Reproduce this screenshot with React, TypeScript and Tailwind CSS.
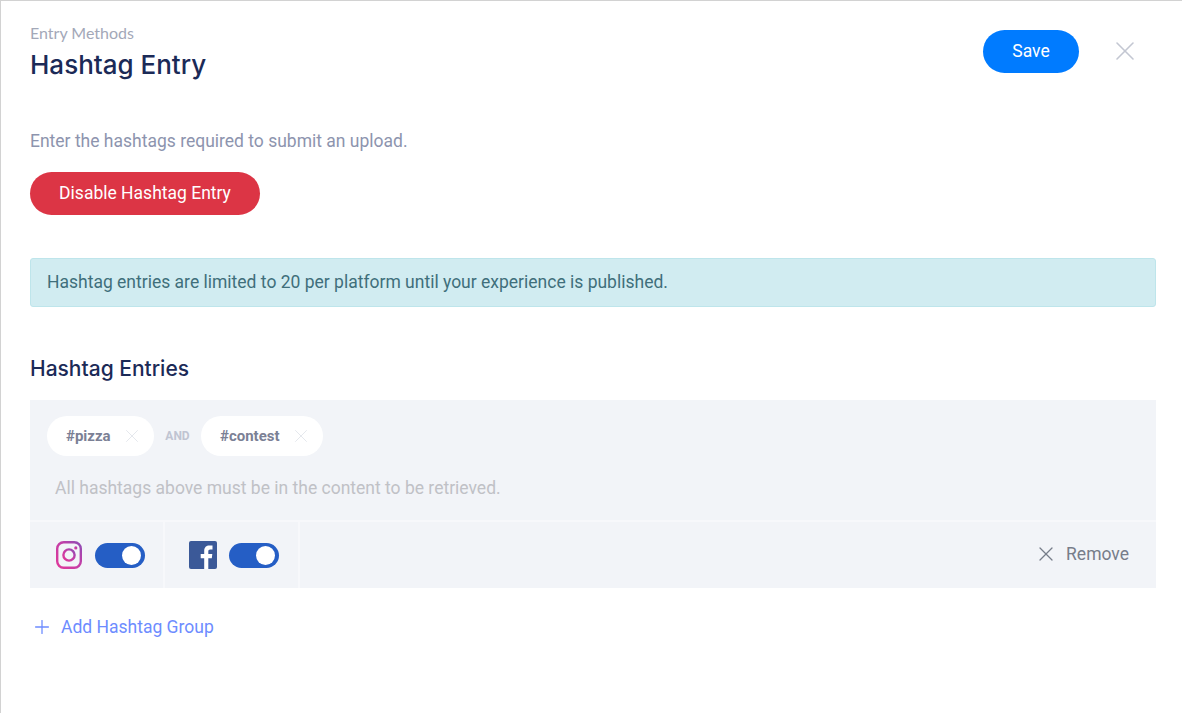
import { Plus, X } from 'lucide-react'

function Toggle() {
  return (
    <div className="flex h-[25px] w-[50px] items-center justify-end rounded-full bg-[#255ec5] pr-[4px]">
      <div className="h-[19px] w-[19px] rounded-full bg-white" />
    </div>
  )
}

function InstagramIcon() {
  return (
    <svg width="28" height="28" viewBox="0 0 28 28" fill="none">
      <defs>
        <linearGradient id="ig" x1="0" y1="1" x2="1" y2="0">
          <stop offset="0" stopColor="#e0389a" />
          <stop offset="0.6" stopColor="#c03fa8" />
          <stop offset="1" stopColor="#8d4cb5" />
        </linearGradient>
      </defs>
      <rect x="2.2" y="1.2" width="23.6" height="25.6" rx="6.5" stroke="url(#ig)" strokeWidth="2.4" />
      <circle cx="14" cy="14" r="5.6" stroke="url(#ig)" strokeWidth="2.4" />
      <circle cx="20.8" cy="6.9" r="1.6" fill="url(#ig)" />
    </svg>
  )
}

function FacebookIcon() {
  return (
    <svg width="28" height="28" viewBox="0 0 28 28">
      <rect width="28" height="28" rx="2" fill="#3b5998" />
      <path
        d="M19.3 28V17.2h3.5l.5-4.2h-4v-2.6c0-1.2.4-2 2.1-2h2.1V4.6c-.4 0-1.700-.2-3.100-.2-3.100 0-5.200 1.900-5.200 5.300V13h-3.500v4.200h3.500V28Z"
        fill="#fff"
      />
    </svg>
  )
}

function Tag({ label, width }: { label: string; width: string }) {
  return (
    <div className={`flex h-[40px] items-center justify-between rounded-full bg-white pl-[19px] pr-[15px] ${width}`}>
      <span className="text-[15px] font-bold text-[#7b8095]">{label}</span>
      <X size={22} strokeWidth={0.8} className="-mr-[4px] text-[#dcdfe6]" />
    </div>
  )
}

export default function App() {
  return (
    <div className="h-[713px] w-[1182px] overflow-hidden border-l border-t border-[#d2d2d2] bg-white pl-[29px] pr-[26px] font-['Roboto',sans-serif]">
      <div className="flex items-start justify-between pt-[22px]">
        <div>
          <p className="font-['Lato',sans-serif] text-[16px] leading-[20px] text-[#a3a8b8]">Entry Methods</p>
          <h1 className="mt-[6px] font-['Inter',sans-serif] text-[26px] font-medium leading-[32px] text-[#1b2a57]">
            Hashtag Entry
          </h1>
        </div>
        <div className="flex items-center pt-[7px]">
          <button className="h-[43px] w-[96px] rounded-full bg-[#007bff] text-[17.5px] font-normal text-white">
            Save
          </button>
          <X size={32} strokeWidth={1.2} className="-mt-[2px] ml-[30px] mr-[15px] text-[#c3c7d2]" />
        </div>
      </div>

      <p className="mt-[48px] text-[17.5px] leading-[24px] text-[#8d94ae]">Enter the hashtags required to submit an upload.</p>
      <button className="mt-[19px] block h-[43px] w-[230px] rounded-full bg-[#dc3545] text-[17.5px] font-normal text-white">
        Disable Hashtag Entry
      </button>

      <div className="mt-[43px] flex h-[49px] items-center rounded-[3px] border border-[#bee5eb] bg-[#d1ecf1] pl-[16px] text-[17.5px] text-[#3f6f7b]">
        Hashtag entries are limited to 20 per platform until your experience is published.
      </div>

      <h2 className="mt-[48px] font-['Inter',sans-serif] text-[21px] font-medium leading-[28px] text-[#1b2a57]">
        Hashtag Entries
      </h2>

      <div className="mt-[17px] bg-[#f2f4f8]">
        <div className="px-[17px] pt-[16px]">
          <div className="flex items-center">
            <Tag label="#pizza" width="w-[107px]" />
            <span className="w-[47px] text-center text-[12px] font-bold text-[#c0c4d2]">AND</span>
            <Tag label="#contest" width="w-[122px]" />
          </div>
          <p className="mt-[20px] pl-[8px] pb-[20px] text-[17.5px] leading-[24px] text-[#c0c1c6]">
            All hashtags above must be in the content to be retrieved.
          </p>
        </div>
        <div className="flex h-[68px] items-center border-t-2 border-white/40">
          <div className="flex h-full w-[135px] items-center gap-[12px] border-r-2 border-white/40 pl-[25px]">
            <InstagramIcon />
            <Toggle />
          </div>
          <div className="flex h-full w-[135px] items-center gap-[12px] border-r-2 border-white/40 pl-[24px]">
            <FacebookIcon />
            <Toggle />
          </div>
          <div className="ml-auto flex items-center gap-[8px] pr-[27px] text-[17.5px] text-[#777d8a]">
            <X size={24} strokeWidth={1.3} className="-mt-[2px]" />
            <span className="-mt-[2px]">Remove</span>
          </div>
        </div>
      </div>

      <div className="mt-[27px] flex items-center gap-[8px] pl-[1px] text-[17.5px] leading-[24px] text-[#6d8cff]">
        <Plus size={22} strokeWidth={1.4} />
        Add Hashtag Group
      </div>
    </div>
  )
}
